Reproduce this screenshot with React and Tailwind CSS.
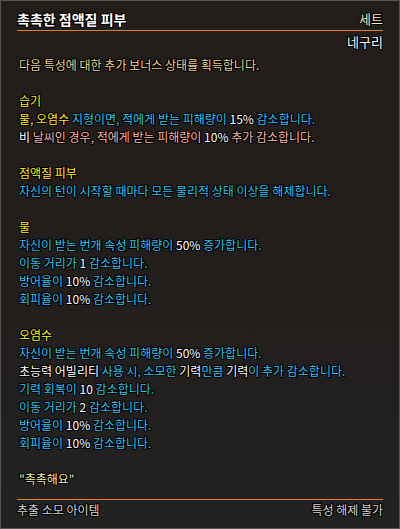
const outline = '[text-shadow:1px_0_0_#000,-1px_0_0_#000,0_1px_0_#000,0_-1px_0_#000,1px_1px_0_#000,-1px_-1px_0_#000,1px_-1px_0_#000,-1px_1px_0_#000]';

const Y = ({ children }) => <span className="text-[#ffee00]">{children}</span>;
const C = ({ children }) => <span className="text-[#22c8f2]">{children}</span>;
const W = ({ children }) => <span className="text-white">{children}</span>;
const P = ({ children }) => <span className="text-[#ffb3a8]">{children}</span>;

function Line({ children }) {
  return <div className="h-[18px] leading-[18px] whitespace-nowrap">{children}</div>;
}

export default function App() {
  return (
    <div
      className={`w-[400px] h-[529px] border border-[#555] bg-linear-to-b from-[#231d19] via-[#221e1c] to-[#222222] text-[12px] ${outline}`}
      style={{ fontFamily: '"Noto Sans CJK KR", "Noto Sans", sans-serif' }}
    >
      <div className="h-full flex flex-col px-[16px]">
        {/* Title */}
        <div className="flex items-end justify-between h-[30px] pb-[2px] border-b border-[#e07f1c]">
          <span className="text-[14px] font-bold text-white leading-[18px]">촉촉한 점액질 피부</span>
          <span className="text-[13px] text-[#f2ecc4] leading-[18px]">세트</span>
        </div>
        <div className="flex justify-end h-[20px] leading-[22px] text-[13px] text-white">네구리</div>

        {/* Body */}
        <div className="pt-[5px] pl-[2px]">
          <Line><span className="text-[#ecd68c]">다음 특성에 대한 추가 보너스 상태를 획득합니다.</span></Line>
          <Line />
          <Line><Y>습기</Y></Line>
          <Line><Y>물, 오염수</Y> <C>지형이면, 적에게 받는 피해량이 </C><W>15%</W><C> 감소합니다.</C></Line>
          <Line><W>비</W> <P>날씨인 경우, 적에게 받는 피해량이 </P><W>10%</W><P> 추가 감소합니다.</P></Line>
          <Line />
          <Line><Y>점액질 피부</Y></Line>
          <Line><C>자신의 턴이 시작할 때마다 모든 물리적 상태 이상을 해제합니다.</C></Line>
          <Line />
          <Line><Y>물</Y></Line>
          <Line><C>자신이 받는 번개 속성 피해량이 </C><W>50%</W><C> 증가합니다.</C></Line>
          <Line><C>이동 거리가 </C><W>1</W><C> 감소합니다.</C></Line>
          <Line><C>방어율이 </C><W>10%</W><C> 감소합니다.</C></Line>
          <Line><C>회피율이 </C><W>10%</W><C> 감소합니다.</C></Line>
          <Line />
          <Line><Y>오염수</Y></Line>
          <Line><C>자신이 받는 번개 속성 피해량이 </C><W>50%</W><C> 증가합니다.</C></Line>
          <Line><W>초능력 어빌리티</W><C> 사용 시, 소모한 </C><W>기력</W><C>만큼 </C><W>기력</W><C>이 추가 감소합니다.</C></Line>
          <Line><C>기력 회복이 </C><W>10</W><C> 감소합니다.</C></Line>
          <Line><C>이동 거리가 </C><W>2</W><C> 감소합니다.</C></Line>
          <Line><C>방어율이 </C><W>10%</W><C> 감소합니다.</C></Line>
          <Line><C>회피율이 </C><W>10%</W><C> 감소합니다.</C></Line>
          <Line />
          <Line><span className="text-[#f4f0a8]">"촉촉해요"</span></Line>
        </div>

        {/* Footer */}
        <div className="mt-[11px] border-t border-[#e07f1c] flex justify-between text-[#d6d6d6] leading-[20px]">
          <span>추출 소모 아이템</span>
          <span>특성 해제 불가</span>
        </div>
      </div>
    </div>
  );
}
